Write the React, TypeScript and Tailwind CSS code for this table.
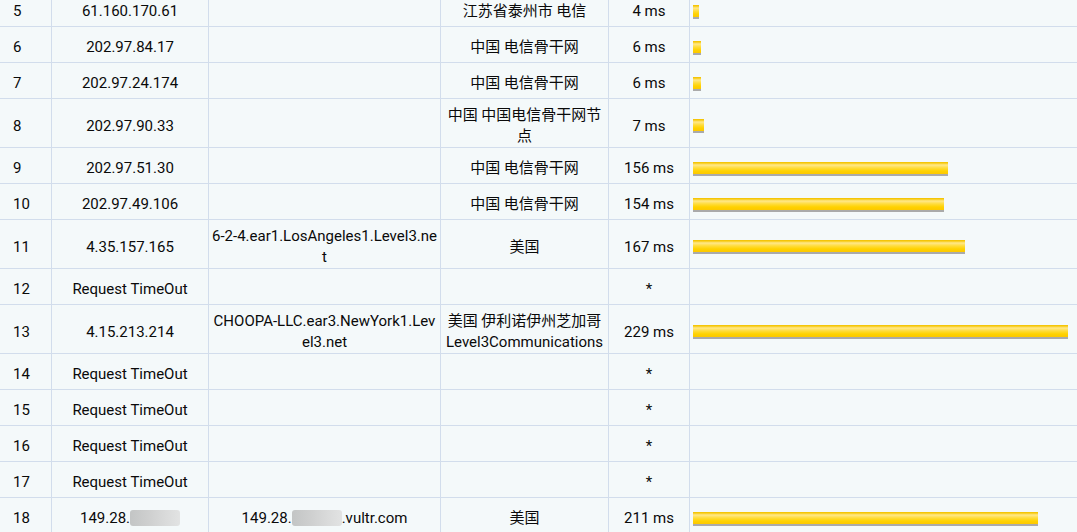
import React from "react";

type Row = {
  n: number;
  ip: React.ReactNode;
  host: React.ReactNode;
  loc: string;
  ms: string;
  bar: number;
};

const Blur = () => (
  <span className="inline-block h-[16px] w-[50px] align-[-3px] rounded-[3px] bg-[linear-gradient(to_right,#c3c5c5_0%,#cfd0d0_40%,#d9dada_70%,#e2e3e3_100%)]" />
);

const rows: Row[] = [
  { n: 5, ip: "61.160.170.61", host: "", loc: "江苏省泰州市 电信", ms: "4 ms", bar: 6 },
  { n: 6, ip: "202.97.84.17", host: "", loc: "中国 电信骨干网", ms: "6 ms", bar: 8 },
  { n: 7, ip: "202.97.24.174", host: "", loc: "中国 电信骨干网", ms: "6 ms", bar: 8 },
  { n: 8, ip: "202.97.90.33", host: "", loc: "中国 中国电信骨干网节点", ms: "7 ms", bar: 11 },
  { n: 9, ip: "202.97.51.30", host: "", loc: "中国 电信骨干网", ms: "156 ms", bar: 255 },
  { n: 10, ip: "202.97.49.106", host: "", loc: "中国 电信骨干网", ms: "154 ms", bar: 251 },
  { n: 11, ip: "4.35.157.165", host: "6-2-4.ear1.LosAngeles1.Level3.net", loc: "美国", ms: "167 ms", bar: 272 },
  { n: 12, ip: "Request TimeOut", host: "", loc: "", ms: "*", bar: 0 },
  { n: 13, ip: "4.15.213.214", host: "CHOOPA-LLC.ear3.NewYork1.Level3.net", loc: "美国 伊利诺伊州芝加哥Level3Communications", ms: "229 ms", bar: 375 },
  { n: 14, ip: "Request TimeOut", host: "", loc: "", ms: "*", bar: 0 },
  { n: 15, ip: "Request TimeOut", host: "", loc: "", ms: "*", bar: 0 },
  { n: 16, ip: "Request TimeOut", host: "", loc: "", ms: "*", bar: 0 },
  { n: 17, ip: "Request TimeOut", host: "", loc: "", ms: "*", bar: 0 },
  {
    n: 18,
    ip: (
      <>
        149.28.
        <Blur />
      </>
    ),
    host: (
      <>
        149.28.
        <Blur />
        .vultr.com
      </>
    ),
    loc: "美国",
    ms: "211 ms",
    bar: 345,
  },
];

const cell =
  "min-h-[36px] border-b border-r border-[#d2ddec] pt-[6px] pb-0 flex items-center";

export default function App() {
  return (
    <div className="h-[532px] w-[1077px] overflow-hidden bg-[#f4f9fa] font-['Roboto','Noto_Sans_CJK_SC',sans-serif] text-[15px] leading-[21px] text-[#0a0a0a]">
      <div className="-mt-[9px] grid grid-cols-[52px_157px_232px_168px_81px_1fr]">
        {rows.map((r) => (
          <React.Fragment key={r.n}>
            <div className={`${cell} pl-[13px]`}>{r.n}</div>
            <div className={`${cell} justify-center px-[4px] text-center`}>
              <span>{r.ip}</span>
            </div>
            <div className={`${cell} justify-center px-[3px] text-center break-all`}>
              <span>{r.host}</span>
            </div>
            <div className={`${cell} justify-center px-[4px] text-center`}>
              <span>{r.loc}</span>
            </div>
            <div className={`${cell} justify-center px-[2px] text-center`}>
              <span>{r.ms}</span>
            </div>
            <div className="flex min-h-[36px] items-center border-b border-[#d2ddec] pt-[6px] pb-0 pl-[3px]">
              {r.bar > 0 && (
                <div
                  className="h-[14px] border-b-2 border-[#aaaaaa] bg-[linear-gradient(to_bottom,#f2c000_0px,#f7ca10_1px,#ffe88a_3px,#ffdc3a_6px,#ffd200_9px,#fcc800_12px)]"
                  style={{ width: r.bar }}
                />
              )}
            </div>
          </React.Fragment>
        ))}
      </div>
    </div>
  );
}
